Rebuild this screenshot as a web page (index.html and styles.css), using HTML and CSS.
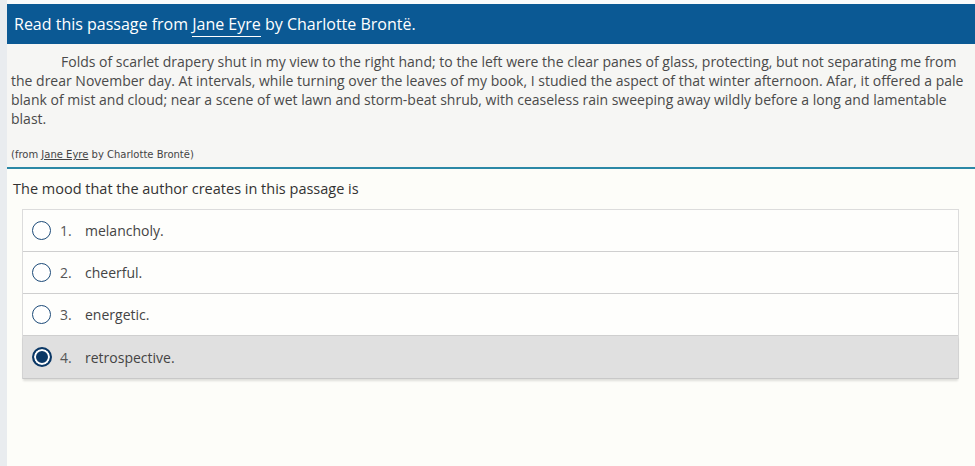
FILE: index.html
```html
<!DOCTYPE html>
<html>
<head>
<meta charset="utf-8">
<link rel="stylesheet" href="styles.css">
</head>
<body>
<div class="page">
  <div class="header">Read this passage from <span class="u">Jane Eyre</span> by Charlotte Brontë.</div>
  <div class="passage">
    <p class="text">Folds of scarlet drapery shut in my view to the right hand; to the left were the clear panes of glass, protecting, but not separating me from the drear November day. At intervals, while turning over the leaves of my book, I studied the aspect of that winter afternoon. Afar, it offered a pale blank of mist and cloud; near a scene of wet lawn and storm-beat shrub, with ceaseless rain sweeping away wildly before a long and lamentable blast.</p>
    <p class="cite">(from <span class="u2">Jane Eyre</span> by Charlotte Brontë)</p>
  </div>
  <div class="question">
    <p class="stem">The mood that the author creates in this passage is</p>
    <div class="options">
      <div class="opt"><span class="radio"></span><span class="num">1.</span><span class="lbl">melancholy.</span></div>
      <div class="opt"><span class="radio"></span><span class="num">2.</span><span class="lbl">cheerful.</span></div>
      <div class="opt"><span class="radio"></span><span class="num">3.</span><span class="lbl">energetic.</span></div>
      <div class="opt sel"><span class="radio on"></span><span class="num">4.</span><span class="lbl">retrospective.</span></div>
    </div>
  </div>
</div>
</body>
</html>
```
FILE: styles.css
```css
html, body { margin: 0; padding: 0; }
body {
  background: #e9ecef;
  font-family: "Open Sans", "Noto Sans", sans-serif;
  width: 975px;
  height: 466px;
  overflow: hidden;
}
.page {
  margin-left: 7px;
  padding-top: 4px;
  background: #fafafa;
  height: 462px;
}
.header {
  background: #0b5994;
  color: #fff;
  font-size: 16px;
  height: 40px;
  line-height: 40px;
  padding-left: 7px;
}
.u { border-bottom: 1px solid #fff; padding-bottom: 1px; }
.passage {
  background: #f6f6f4;
  padding: 8px 10px 0 4px;
  border-bottom: 2px solid #2b88a6;
  height: 115px;
}
.text {
  margin: 0;
  font-size: 14px;
  line-height: 19px;
  color: #4a4a4a;
  text-indent: 50px;
}
.cite {
  margin: 20px 0 0;
  font-family: "DejaVu Sans", Verdana, sans-serif;
  font-size: 10px;
  line-height: 14px;
  color: #444;
}
.u2 { text-decoration: underline; }
.question {
  background: #fdfdf9;
  height: 300px;
  padding: 10px 16px 0 15px;
}
.stem {
  margin: 0 0 10px -9px;
  font-size: 14.5px;
  color: #333;
  line-height: 20px;
}
.options {
  border: 1px solid #dcdcdc;
  border-bottom: none;
}
.opt {
  display: flex;
  align-items: center;
  height: 41px;
  border-bottom: 1px solid #cfcfcf;
  background: #fefefc;
  font-size: 14px;
  color: #444;
}
.opt.sel {
  height: 42px;
  background: #e0e0e0;
  border-bottom: 1px solid #c8c8c8;
  box-shadow: 0 2px 2px rgba(0,0,0,0.12);
}
.radio {
  width: 19px;
  height: 19px;
  border: 1.5px solid #1c4a78;
  border-radius: 50%;
  background: #fff;
  margin-left: 9px;
  margin-right: 9px;
  box-sizing: border-box;
}
.radio.on {
  width: 20px;
  height: 20px;
  margin-left: 9px;
  margin-right: 8px;
  border: 2px solid #0b3866;
  background: #0b3866;
  box-shadow: inset 0 0 0 2px #fff;
}
.num { width: 25px; color: #555; }
.lbl { color: #444; }
```
